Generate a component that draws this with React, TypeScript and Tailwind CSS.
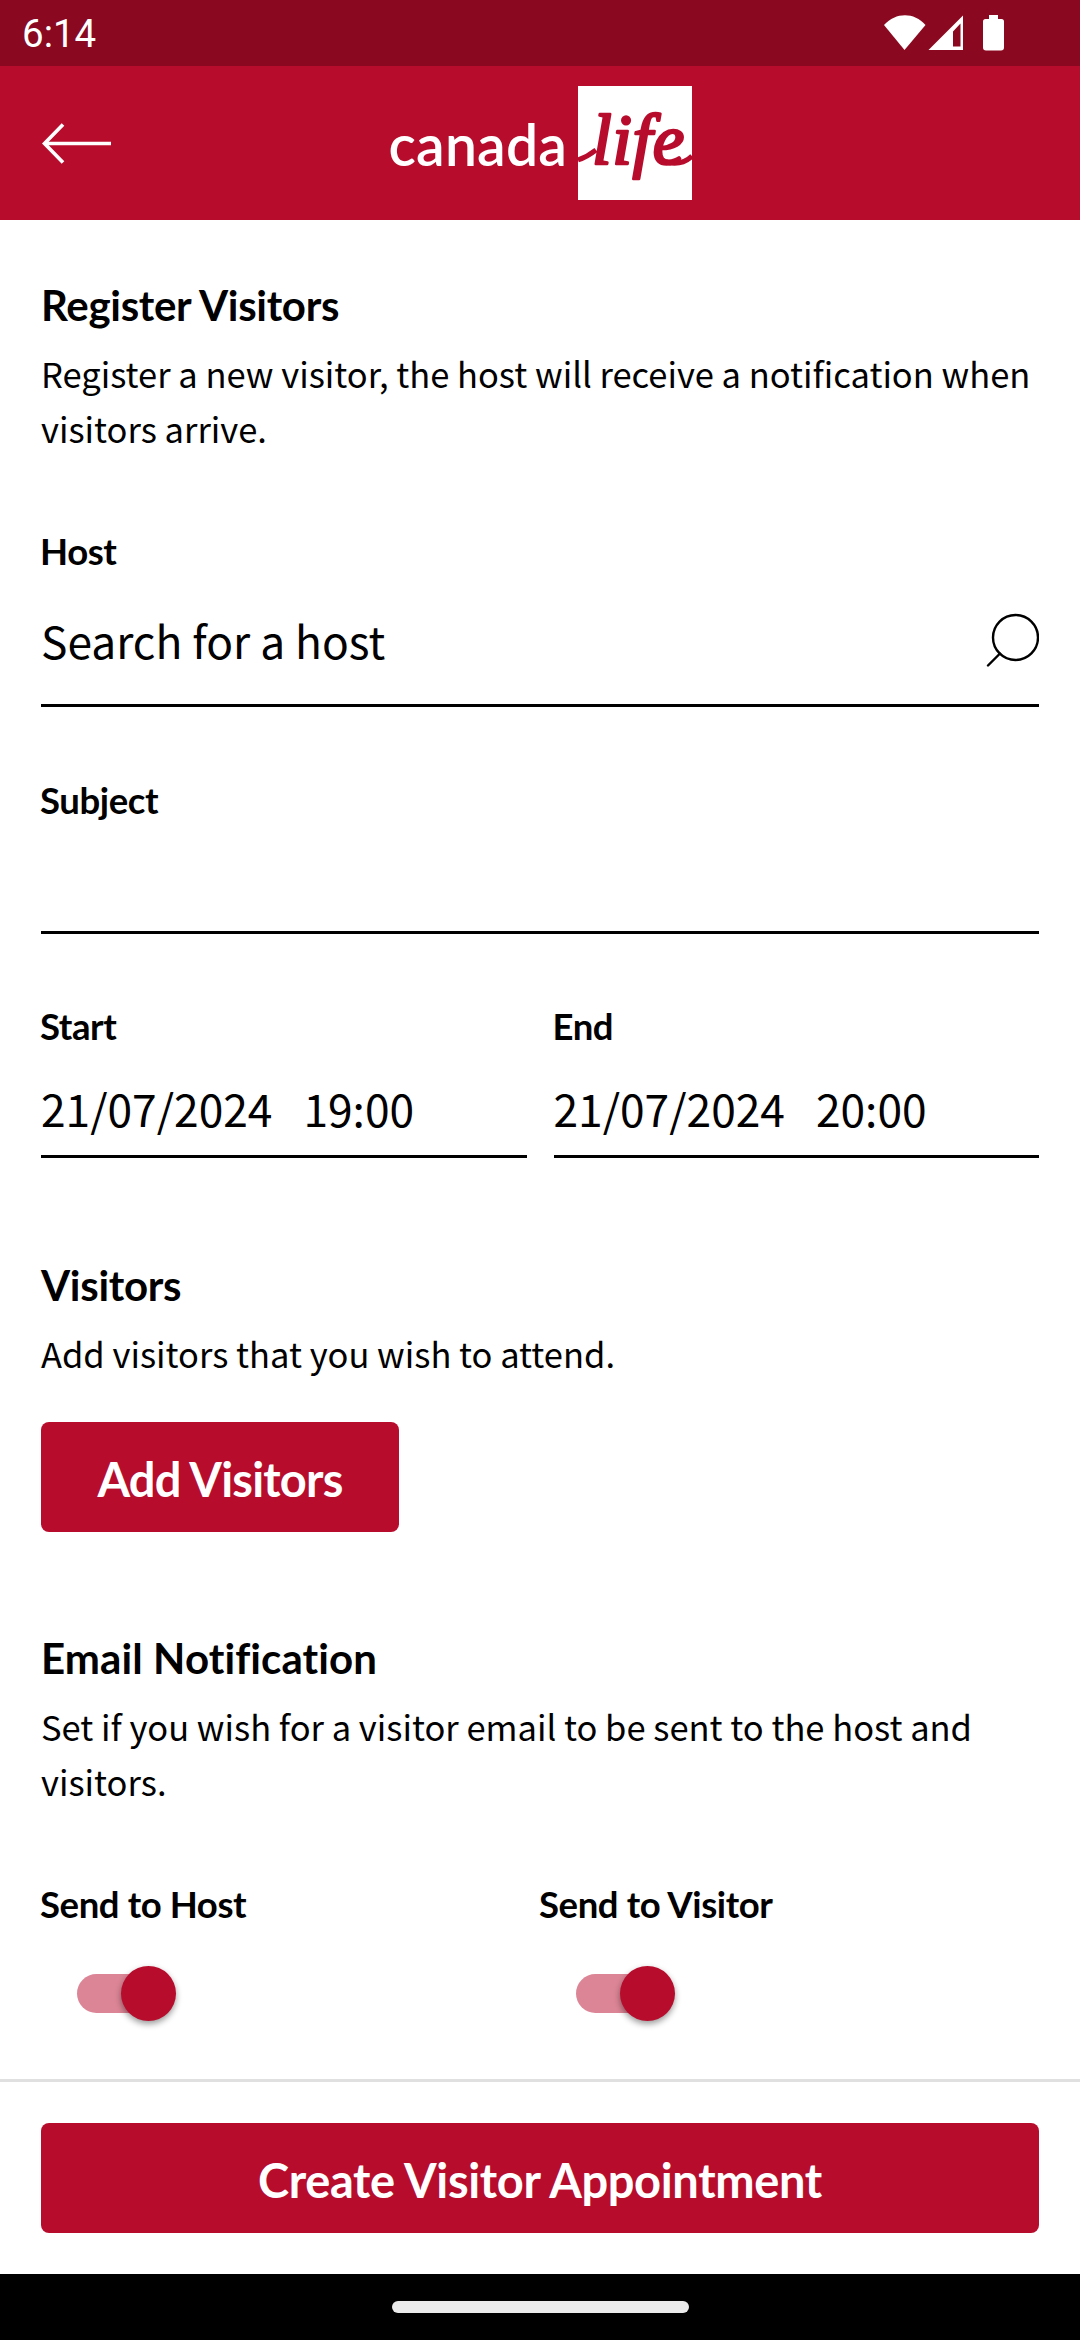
import { useState } from "react";
import type { ReactNode } from "react";

interface Slot {
  label: string;
  date: string;
  time: string;
}

const SLOTS: Slot[] = [
  { label: "Start", date: "21/07/2024", time: "19:00" },
  { label: "End", date: "21/07/2024", time: "20:00" },
];

function StatusBar() {
  return (
    <div className="flex h-[66px] shrink-0 items-center bg-[#8a0920] pl-[22px] pr-[76px] text-white">
      <span className="pt-0.5 font-[Roboto,sans-serif] text-[38.5px] leading-[66px]">6:14</span>
      {/* wifi, signal, battery */}
      <svg className="ml-auto" width="122" height="40" viewBox="0 0 122 40" fill="currentColor">
        <path d="M2 12C14 -1 32 -1 43.500 12L22.500 37Z" />
        <path fillRule="evenodd" d="M81 2.500V37H46.500ZM78.500 10.500L71 18.500V33.500H78.500Z" />
        <path d="M107 2h9v4h3.500a2.500 2.500 0 0 1 2.500 2.500v26a3 3 0 0 1-3 3h-15a3 3 0 0 1-3-3v-26A2.500 2.500 0 0 1 103.500 6h3.500z" />
      </svg>
    </div>
  );
}

function Logo() {
  return (
    <div className="flex items-center text-white">
      <span className="w-[189px] pt-0.5 font-[Lato,sans-serif] text-[57px] font-semibold leading-[70px] tracking-[0.2px]">
        canada
      </span>
      <svg width="114" height="114" viewBox="0 0 114 114">
        <rect width="114" height="114" fill="#fff" />
        <text
          x="14"
          y="78"
          fill="#b80c2d"
          stroke="#b80c2d"
          strokeWidth="2.6"
          strokeLinejoin="round"
          className="font-['Liberation_Serif',serif] text-[71px] italic tracking-[0.5px]"
        >
          life
        </text>
        {/* entry and exit swashes */}
        <path
          d="M0 74Q9 71 18 64M88 76Q104 80 114 70"
          fill="none"
          stroke="#b80c2d"
          strokeWidth="5"
        />
      </svg>
    </div>
  );
}

function Header() {
  return (
    <header className="grid h-[154px] shrink-0 grid-cols-[1fr_auto_1fr] items-center bg-[#b80c2d]">
      <button type="button" aria-label="Back" className="justify-self-start pl-[42px]">
        <svg width="70" height="42" viewBox="0 0 70 42" fill="none" stroke="#fff" strokeWidth="3.600">
          <path d="M69 21.500H3M21 2.500L2.500 21.500L21 40.500" />
        </svg>
      </button>
      <Logo />
    </header>
  );
}

function Title({ children, className = "tracking-[-0.3px]" }: { children: ReactNode; className?: string }) {
  return (
    <h2 className={`pt-0.5 font-[Lato,sans-serif] text-[42px] font-bold leading-[50px] ${className}`}>
      {children}
    </h2>
  );
}

function Copy({ children }: { children: ReactNode }) {
  return <p className="mt-4 text-[34.5px] leading-[55px]">{children}</p>;
}

function Label({ children }: { children: ReactNode }) {
  return (
    <div className="-ml-px font-[Lato,sans-serif] text-[36.5px] font-bold leading-[43px] tracking-[-0.4px]">
      {children}
    </div>
  );
}

function Toggle({ label }: { label: string }) {
  const [on, setOn] = useState(true);
  return (
    <div>
      <Label>{label}</Label>
      <button
        type="button"
        role="switch"
        aria-checked={on}
        aria-label={label}
        onClick={() => setOn(!on)}
        className="ml-9 mt-10 flex h-[55px] w-[99px] items-center"
      >
        <span className="h-[39px] w-[80px] shrink-0 rounded-full bg-[#dc8596]" />
        <span
          className={`size-[55px] shrink-0 rounded-full bg-[#b80c2d] shadow-[0_3px_6px_rgba(0,0,0,0.4)] ${
            on ? "-ml-9" : "-ml-20"
          }`}
        />
      </button>
    </div>
  );
}

export default function App() {
  return (
    <div className="flex h-[2340px] w-[1080px] flex-col overflow-hidden bg-white font-['Noto_Sans_CJK_SC',sans-serif] text-black">
      <StatusBar />
      <Header />

      <main className="h-[1859px] shrink-0 px-[41px] pt-[58px]">
        <Title>Register Visitors</Title>
        <Copy>
          Register a new visitor, the host will receive a notification when
          <br />
          visitors arrive.
        </Copy>

        <div className="mt-[74px]">
          <Label>Host</Label>
          <div className="flex h-[134px] items-center justify-between border-b-[3px] border-black">
            <span className="pt-0.5 text-[44.3px] leading-[60px]">Search for a host</span>
            <svg
              className="mt-0.5"
              width="53"
              height="54"
              viewBox="0 0 53 54"
              fill="none"
              stroke="#000"
              strokeWidth="2.400"
              strokeLinecap="round"
            >
              <circle cx="29.500" cy="24.500" r="22.500" />
              <path d="M14 40.500L2 52.500" />
            </svg>
          </div>
        </div>

        <div className="mt-[72px]">
          <Label>Subject</Label>
          <div className="h-28 border-b-[3px] border-black" />
        </div>

        <div className="mt-[71px] flex gap-[27px]">
          {SLOTS.map((slot) => (
            <div key={slot.label} className="flex-1">
              <Label>{slot.label}</Label>
              <div className="flex gap-[31px] border-b-[3px] border-black pb-[17px] pt-[30px] text-[44.3px] leading-[60px]">
                <span>{slot.date}</span>
                <span>{slot.time}</span>
              </div>
            </div>
          ))}
        </div>

        <section className="mt-[100px]">
          <Title>Visitors</Title>
          <Copy>Add visitors that you wish to attend.</Copy>
          <button
            type="button"
            className="mt-[41px] flex h-[110px] w-[358px] items-center justify-center rounded-lg bg-[#b80c2d] pt-1 font-[Lato,sans-serif] text-[47px] font-bold leading-[60px] tracking-[-0.8px] text-white"
          >
            Add Visitors
          </button>
        </section>

        <section className="mt-[99px]">
          <Title className="tracking-[0.1px]">Email Notification</Title>
          <Copy>
            Set if you wish for a visitor email to be sent to the host and
            <br />
            visitors.
          </Copy>
          <div className="mt-[74px] grid grid-cols-2">
            <Toggle label="Send to Host" />
            <Toggle label="Send to Visitor" />
          </div>
        </section>
      </main>

      <footer className="h-[195px] shrink-0 border-t-[3px] border-[#e0e0e0] px-[41px] pt-[41px]">
        <button
          type="button"
          className="flex h-[110px] w-full items-center justify-center rounded-lg bg-[#b80c2d] pt-1 font-[Lato,sans-serif] text-[47px] font-bold leading-[60px] tracking-[-0.35px] text-white"
        >
          Create Visitor Appointment
        </button>
      </footer>

      {/* gesture bar */}
      <div className="flex flex-1 items-center justify-center bg-black">
        <div className="h-3 w-[297px] rounded-full bg-[#ebebeb]" />
      </div>
    </div>
  );
}
